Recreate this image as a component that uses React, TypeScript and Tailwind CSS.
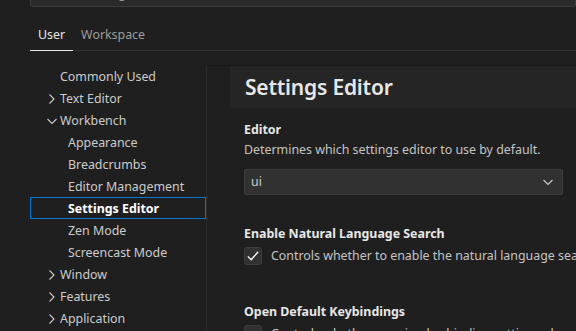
import React from 'react';

const font = { fontFamily: '"Noto Sans", "Open Sans", sans-serif' };

type Row = { label: string; level: 0 | 1; chevron?: 'right' | 'down'; selected?: boolean };

const rows: Row[] = [
  { label: 'Commonly Used', level: 0 },
  { label: 'Text Editor', level: 0, chevron: 'right' },
  { label: 'Workbench', level: 0, chevron: 'down' },
  { label: 'Appearance', level: 1 },
  { label: 'Breadcrumbs', level: 1 },
  { label: 'Editor Management', level: 1 },
  { label: 'Settings Editor', level: 1, selected: true },
  { label: 'Zen Mode', level: 1 },
  { label: 'Screencast Mode', level: 1 },
  { label: 'Window', level: 0, chevron: 'right' },
  { label: 'Features', level: 0, chevron: 'right' },
  { label: 'Application', level: 0, chevron: 'right' },
];

function Chevron({ dir }: { dir: 'right' | 'down' }) {
  return (
    <svg width="16" height="16" viewBox="0 0 16 16" fill="none" stroke="#cccccc" strokeWidth="1.1">
      {dir === 'right' ? <path d="M5.5 3.5L10 8L5.5 12.5" /> : <path d="M3.5 6L8 10.5L12.5 6" />}
    </svg>
  );
}

function TreeRow({ row }: { row: Row }) {
  return (
    <div
      className={`flex h-[22px] items-center text-[12.4px] ${
        row.selected ? 'border border-[#0078d4] font-bold text-white' : 'border border-transparent text-[#cccccc]'
      }`}
    >
      <div className={`flex ${row.level === 0 ? 'w-[29px]' : 'w-[37px]'} shrink-0 justify-end pt-px`}>
        {row.chevron && (
          <div className="w-[16px]">
            <Chevron dir={row.chevron} />
          </div>
        )}
      </div>
      <span className="whitespace-nowrap pt-[2px]">{row.label}</span>
    </div>
  );
}

function Checkbox({ checked }: { checked: boolean }) {
  return (
    <div className="flex h-[18px] w-[18px] shrink-0 items-center justify-center rounded-[3px] border border-[#3c3c3c] bg-[#313131]">
      {checked && (
        <svg width="16" height="16" viewBox="0 0 16 16" fill="none" stroke="#ffffff" strokeWidth="1.3">
          <path d="M2.8 8.4L6.2 11.8L13.2 3.8" />
        </svg>
      )}
    </div>
  );
}

export default function App() {
  return (
    <div className="h-[331px] w-[576px] overflow-hidden bg-[#1f1f1f] pl-[30px]" style={font}>
      {/* search box, mostly scrolled out of view */}
      <div className="-mt-[19px] flex h-[26px] items-center rounded-[2px] border border-[#3c3c3c] bg-[#2a2a2a] pl-[12px] text-[12.4px] text-[#989898]">
        Search settings
      </div>

      {/* tabs */}
      <div className="flex h-[44px] items-end border-b border-[#333333] text-[12.4px]">
        <div className="-mb-px border-b border-[#e7e7e7] px-2 pb-[7px] leading-[16px] text-[#e7e7e7]">User</div>
        <div className="px-2 pb-[7px] leading-[16px] text-[#9d9d9d]">Workspace</div>
      </div>

      <div className="mt-[14px] flex">
        {/* tree */}
        <div className="w-[176px] shrink-0">
          {rows.map((r) => (
            <TreeRow key={r.label} row={r} />
          ))}
        </div>

        {/* settings list */}
        <div className="h-[300px] min-w-0 flex-1 overflow-hidden border-l border-t border-[#2b2b2b] border-t-[#1a1a1a] pl-[23px]">
          <div className="flex h-[42px] items-center bg-[#252526] pl-[15px]">
            <span className="text-[21px] font-semibold leading-none tracking-[-0.2px] text-[#e7e7e7]">
              Settings Editor
            </span>
          </div>

          <div className="pl-[14px] pr-[13px]">
            <div className="mt-[14px] text-[12.4px] font-bold leading-[16px] text-[#e7e7e7]">Editor</div>
            <div className="mt-[4px] whitespace-nowrap text-[12.4px] leading-[16px] text-[#c4c4c4]">
              Determines which settings editor to use by default.
            </div>
            <div className="mt-[11px] flex h-[26px] items-center justify-between rounded-[2px] border border-[#3c3c3c] bg-[#313131] pl-[6px] pr-[6px] text-[12.4px] text-[#cccccc]">
              <span>ui</span>
              <svg width="16" height="16" viewBox="0 0 16 16" fill="none" stroke="#cccccc" strokeWidth="1.1">
                <path d="M3.5 6L8 10.5L12.5 6" />
              </svg>
            </div>

            <div className="mt-[31px] whitespace-nowrap text-[12.4px] font-bold leading-[16px] text-[#e7e7e7]">
              Enable Natural Language Search
            </div>
            <div className="mt-[5px] flex items-center gap-[9px]">
              <Checkbox checked />
              <span className="whitespace-nowrap text-[12.4px] leading-[16px] text-[#c4c4c4]">
                Controls whether to enable the natural language search mode for settings.
              </span>
            </div>

            <div className="mt-[39px] whitespace-nowrap text-[12.4px] font-bold leading-[16px] text-[#e7e7e7]">
              Open Default Keybindings
            </div>
            <div className="mt-[5px] flex items-center gap-[9px]">
              <Checkbox checked={false} />
              <span className="whitespace-nowrap text-[12.4px] leading-[16px] text-[#c4c4c4]">
                Controls whether opening keybinding settings also opens a view of all default keybindings.
              </span>
            </div>
          </div>
        </div>
      </div>
    </div>
  );
}
